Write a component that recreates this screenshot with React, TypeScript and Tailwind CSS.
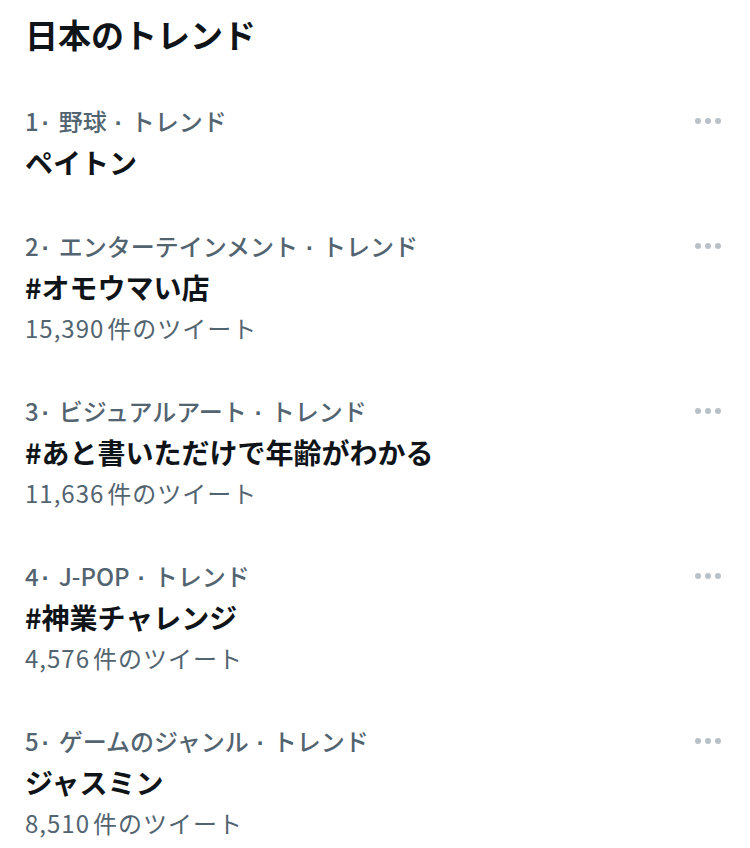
type Trend = {
  rank: number;
  category: string;
  name: string;
  tweets?: string;
};

const TRENDS: Trend[] = [
  { rank: 1, category: '野球', name: 'ペイトン' },
  { rank: 2, category: 'エンターテインメント', name: '#オモウマい店', tweets: '15,390' },
  { rank: 3, category: 'ビジュアルアート', name: '#あと書いただけで年齢がわかる', tweets: '11,636' },
  { rank: 4, category: 'J-POP', name: '#神業チャレンジ', tweets: '4,576' },
  { rank: 5, category: 'ゲームのジャンル', name: 'ジャスミン', tweets: '8,510' },
];

function MoreDots() {
  return (
    <button className="flex h-[41px] items-center gap-[4px]" aria-label="More">
      <span className="h-[6px] w-[6px] rounded-full bg-[#b8c0c8]" />
      <span className="h-[6px] w-[6px] rounded-full bg-[#b8c0c8]" />
      <span className="h-[6px] w-[6px] rounded-full bg-[#b8c0c8]" />
    </button>
  );
}

function Dot({ wide }: { wide?: boolean }) {
  return (
    <span
      className={wide ? 'mx-[8px] font-bold leading-none' : 'ml-[3px] mr-[9px] font-bold leading-none'}
      style={{ fontFamily: '"Liberation Sans", sans-serif' }}
    >
      ·
    </span>
  );
}

function TrendRow({ trend }: { trend: Trend }) {
  return (
    <li className="flex items-start justify-between py-[21px]">
      <div className="flex flex-col">
        <p className="text-[24px] font-medium leading-[41px] text-[#536471]">
          {trend.rank}
          <Dot />
          {trend.category}
          <Dot wide />
          トレンド
        </p>
        <p className="text-[28px] font-bold leading-[42px] text-[#0f1419]">{trend.name}</p>
        {trend.tweets && (
          <p className="text-[24px] leading-[40px] tracking-[1px] text-[#536471]">
            {trend.tweets}
            <span className="ml-[3px]">件のツイート</span>
          </p>
        )}
      </div>
      <MoreDots />
    </li>
  );
}

export default function App() {
  return (
    <main
      className="min-h-[848px] w-[750px] bg-white pl-[25px] pr-[29px] pt-[12px]"
      style={{ fontFamily: '"Noto Sans CJK JP", "Noto Sans", sans-serif' }}
    >
      <h1 className="mb-[23px] text-[33px] font-bold leading-[44px] text-[#0f1419]">日本のトレンド</h1>
      <ul className="flex flex-col">
        {TRENDS.map((t) => (
          <TrendRow key={t.rank} trend={t} />
        ))}
      </ul>
    </main>
  );
}
